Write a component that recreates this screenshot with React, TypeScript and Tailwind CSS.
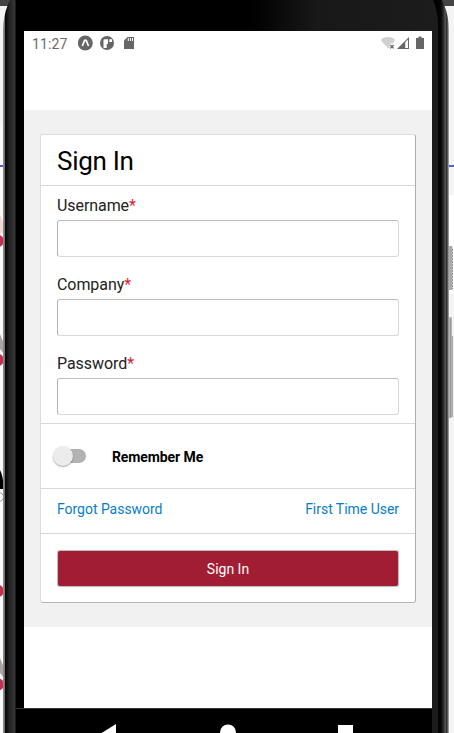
import React from "react";

function Backdrop() {
  return (
    <svg className="absolute inset-0" width="454" height="733" viewBox="0 0 454 733" aria-hidden="true">
      <rect width="454" height="733" fill="#f4f4f4" />
      <rect y="125" width="6" height="608" fill="#fafafa" />
      <rect x="448" y="195" width="6" height="99" fill="#fff" />
      <rect width="454" height="6" fill="#444" />
      <rect y="165" width="454" height="2" fill="#5b5bc4" />
      <path d="M0 215Q3 220 5 232L0 234Z" fill="#f3d9d0" />
      <path d="M0 334L4 344V354L0 349Z" fill="#aaa3a0" />
      <path d="M0 658L4 668V678L0 673Z" fill="#aaa3a0" />
      <path d="M0 470Q3 475 4 489H0Z" fill="#000" />
      <circle cx="-1" cy="497" r="4.500" fill="none" stroke="#999" />
      <circle cx="-2" cy="241" r="6" fill="#c5304f" />
      <circle cx="-2" cy="360" r="6" fill="#c5304f" />
      <circle cx="-2" cy="591" r="6" fill="#c5304f" />
      <circle cx="-2" cy="684.500" r="6" fill="#c5304f" />
      <rect x="448" y="246" width="4.500" height="44" rx="1" fill="#aaa" />
      <path d="M452.500 249V289" stroke="#999" strokeDasharray="2 1" />
      <rect x="448" y="317" width="4" height="101" rx="1" fill="#b5b5b5" />
      <path d="M452.500 336V417M450.500 319V417" stroke="#888" strokeWidth=".7" />
    </svg>
  );
}

function StatusBar() {
  return (
    <div className="flex h-[79px] items-start bg-white pt-[4px] pl-[8px] text-[#666]">
      <span className="w-[46px] text-[14px] leading-[18px] tracking-[0.1px] text-[#696969]">11:27</span>
      <svg width="58" height="18" viewBox="0 0 58 18" fill="#666">
        <circle cx="7.300" cy="8" r="7.500" />
        <path d="M4.300 11L6.500 5.700Q7.400 4.500 8.300 5.700L10.500 11" fill="none" stroke="#fff" strokeWidth="1.700" strokeLinejoin="round" />
        <circle cx="29" cy="8" r="7" />
        <path d="M25.500 5.500Q25.500 4.300 26.700 4.300H30V9H28.700V13H25.500Z M31.300 4.300H34V7H31.300Z" fill="#fff" />
        <path d="M49.500 2H56V14H46V5.500Z" />
        <path d="M50.300 3V6M52.400 3V6M54.500 3V6" stroke="#fff" strokeWidth="1" />
      </svg>
      <svg className="mr-[7px] ml-auto" width="45" height="18" viewBox="0 0 45 18" fill="#666">
        <path d="M1 5C2.500 1 13.500 1 15 5L12.500 8.700H9.700V13H8L1.800 6.500Z" fill="#d0d0d0" />
        <path d="M10.300 10L13.700 13.400M13.700 10L10.300 13.400" stroke="#666" strokeWidth="1.300" />
        <path d="M17 14L29 2V14Z" />
        <path d="M25.200 7.200L28 4.500V13H25.200Z" fill="#fff" />
        <path d="M36 3H38.500V1.500H41.500V3H44V14H36Z" />
      </svg>
    </div>
  );
}

function Field({ label }: { label: string }) {
  return (
    <label className="block h-[79px]">
      <span className="block h-[24px] text-[16px] leading-[20px] tracking-[-0.07px] text-[#222]">
        {label}<span className="text-[#e51b35]">*</span>
      </span>
      <input
        aria-label={label}
        className="block h-[37px] w-full rounded-[3px] border border-[#d9d9d9] border-t-[#b9bec1] border-l-[#b0b3b6] bg-white outline-none"
      />
    </label>
  );
}

function SignInCard() {
  return (
    <div className="h-[469px] rounded-[3px] border border-[#dcdcdc] border-r-[#abaeb1] border-b-[#b4b6b8] bg-white">
      <h1 className="h-[51px] border-b border-[#d9d9d9] pl-[16px] text-[26px] leading-[52px] tracking-[-0.3px] text-black">Sign In</h1>
      <div className="h-[238px] border-b border-[#d9d9d9] px-[16px] pt-[10px]">
        <Field label="Username" />
        <Field label="Company" />
        <Field label="Password" />
      </div>
      <div className="flex h-[65px] items-center border-b border-[#d9d9d9] pl-[12px]">
        <div className="flex h-[20px] w-[33px] items-center">
          <div className="z-10 size-[20px] shrink-0 rounded-full bg-[#ececec] shadow-[0_1px_1.5px_rgba(0,0,0,0.35)]" />
          <div className="-ml-[10px] h-[14px] w-[23px] shrink-0 rounded-r-full bg-[#b2b2b2]" />
        </div>
        <span className="mt-[2px] ml-[26px] text-[14px] leading-[20px] font-bold tracking-[-0.1px] text-black">Remember Me</span>
      </div>
      <div className="flex h-[45px] justify-between border-b border-[#d9d9d9] px-[16px] pt-[10px] text-[14px] leading-[20px] tracking-[-0.03px] text-[#087dc5]">
        <a>Forgot Password</a>
        <a>First Time User</a>
      </div>
      <button className="mx-[17px] mt-[17px] block h-[35px] w-[340px] rounded-[2px] bg-[#a11d34] pt-px text-center text-[14px] leading-[35px] text-white shadow-[0_0_1px_1px_rgba(90,80,80,0.4)]">
        Sign In
      </button>
    </div>
  );
}

export default function App() {
  return (
    <div className="relative h-[733px] w-[454px] overflow-hidden font-['Roboto',sans-serif]">
      <Backdrop />
      <div className="relative -mt-[38px] ml-[3px] h-[771px] w-[446px] rounded-t-[68px] bg-[linear-gradient(90deg,#909090_0px,#777_1.5px,#080808_2.5px,#111_4px,#222_6px,#2c2c2c_9px,#373737_12px,#000_13px,#000_434px,#080808_438px,#222_440px,#4d4d4d_442px,#555_443px,#111_444px,#999_445px,#999_446px)] pr-[11px] pl-[13px]">
        <div className="h-full rounded-t-[62px] bg-[linear-gradient(90deg,#000_235px,#181818_300px,#1c1c1c_422px)] pt-[69px] pr-[6px] pl-[8px]">
          <main className="h-[677px] bg-white">
            <StatusBar />
            <section className="h-[517px] bg-[#f1f1f1] px-[16px] pt-[24px]">
              <SignInCard />
            </section>
          </main>
          <nav className="-ml-[8px] flex h-[25px] items-start border-t border-[#333] bg-black pt-[15px]">
            <svg width="416" height="10" viewBox="0 0 416 10" fill="#fff">
              <path d="M84 10L100 0V10Z" />
              <circle cx="212" cy="8.500" r="8" />
              <rect x="322" y="1" width="15" height="9" />
            </svg>
          </nav>
        </div>
      </div>
    </div>
  );
}
